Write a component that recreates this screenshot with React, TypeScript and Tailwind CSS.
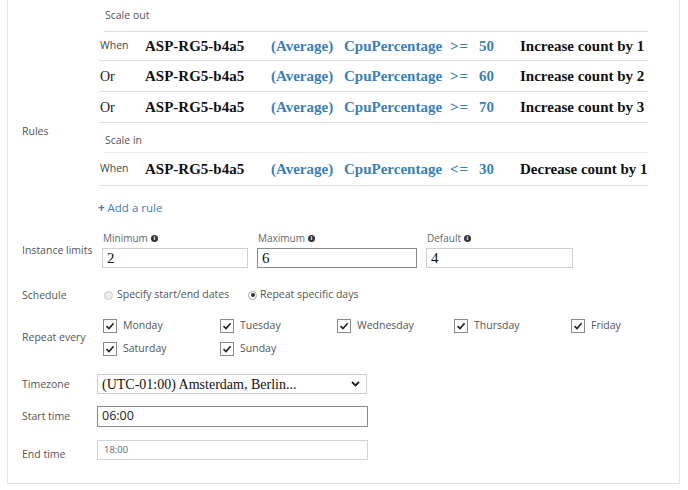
import type { ReactNode } from "react";

const SANS = "font-['Open_Sans','Noto_Sans',sans-serif]";
const SERIF = "font-['Liberation_Serif','Times_New_Roman',serif]";

type Rule = {
  lead: string;
  op: string;
  value: string;
  action: string;
  height: string;
};

const scaleOut: Rule[] = [
  { lead: "When", op: ">=", value: "50", action: "Increase count by 1", height: "h-[29px]" },
  { lead: "Or", op: ">=", value: "60", action: "Increase count by 2", height: "h-[31px]" },
  { lead: "Or", op: ">=", value: "70", action: "Increase count by 3", height: "h-[31px]" },
];

const scaleIn: Rule[] = [
  { lead: "When", op: "<=", value: "30", action: "Decrease count by 1", height: "h-[33px]" },
];

const days = [
  ["Monday", "Tuesday", "Wednesday", "Thursday", "Friday"],
  ["Saturday", "Sunday"],
];

function RuleRow({ rule }: { rule: Rule }) {
  return (
    <div className={`flex items-center border-b border-[#dedede] ${rule.height}`}>
      {rule.lead === "When" ? (
        <span className={`w-[46px] pl-[1px] text-[10.5px] text-[#444] ${SANS}`}>When</span>
      ) : (
        <span className={`w-[46px] pl-[1px] text-[14px] text-[#222] ${SERIF}`}>Or</span>
      )}
      <span className={`w-[126px] text-[15px] font-bold text-[#111] ${SERIF}`}>ASP-RG5-b4a5</span>
      <span className={`w-[73px] text-[15px] font-bold text-[#3a80b6] ${SERIF}`}>(Average)</span>
      <span className={`w-[106px] text-[15px] font-bold text-[#3a80b6] ${SERIF}`}>CpuPercentage</span>
      <span className={`w-[29px] text-[15px] font-bold tracking-[1px] text-[#3a80b6] ${SERIF}`}>{rule.op}</span>
      <span className={`w-[41px] text-[15px] font-bold text-[#3a80b6] ${SERIF}`}>{rule.value}</span>
      <span className={`flex-1 whitespace-nowrap text-[15px] font-bold text-[#111] ${SERIF}`}>{rule.action}</span>
    </div>
  );
}

function Info() {
  return (
    <span className="ml-[3px] inline-flex h-[7px] w-[7px] items-center justify-center rounded-full bg-[#333] text-[6px] font-bold leading-none text-white">
      i
    </span>
  );
}

function Checkbox({ label }: { label: string }) {
  return (
    <div className="flex w-[117px] shrink-0 items-center gap-[6px]">
      <span className="flex h-[14px] w-[14px] items-center justify-center border border-[#8a8a8a] bg-white">
        <svg width="10" height="10" viewBox="0 0 10 10">
          <path d="M1.5 5.2 L4 7.6 L8.6 2.2" fill="none" stroke="#222" strokeWidth="1.6" />
        </svg>
      </span>
      <span className={`text-[10.5px] text-[#555] ${SANS}`}>{label}</span>
    </div>
  );
}

function Row({ label, children, className = "", labelClass = "self-center" }: {
  label: string;
  children: ReactNode;
  className?: string;
  labelClass?: string;
}) {
  return (
    <div className={`flex ${className}`}>
      <div className={`w-[75px] shrink-0 text-[10.5px] leading-[15px] text-[#555] ${SANS} ${labelClass}`}>{label}</div>
      <div className="min-w-0 flex-1">{children}</div>
    </div>
  );
}

export default function App() {
  return (
    <div className="h-[490px] w-[688px] overflow-hidden bg-white">
      <div className="ml-[7px] h-[484px] w-[673px] border-b border-l border-r border-[#e4e4e4] pl-[14px]">
        <Row label="Rules" labelClass="pt-[124px]">
          <div className="ml-[2px] w-[549px]">
            <div className={`ml-[5px] flex h-[32px] items-center border-b border-[#dedede] pl-[1px] text-[10.5px] text-[#555] ${SANS}`}>
              Scale out
            </div>
            {scaleOut.map((rule, i) => (
              <RuleRow key={i} rule={rule} />
            ))}
            <div className={`ml-[5px] h-[30px] border-b border-[#ececec] pl-[1px] pt-[10px] text-[10.5px] leading-[15px] text-[#555] ${SANS}`}>
              Scale in
            </div>
            {scaleIn.map((rule, i) => (
              <RuleRow key={i} rule={rule} />
            ))}
          </div>
          <div className={`h-[40px] pl-[1px] pt-[14px] text-[11.5px] leading-[16px] text-[#3a80b6] ${SANS}`}>
            <span className="font-bold">+</span> Add a rule
          </div>
        </Row>

        <Row label="Instance limits" labelClass="pt-[17px] self-start">
          <div className="ml-[5px] flex gap-[9px]">
            {[
              { name: "Minimum", value: "2", w: "w-[146px]", border: "border-[#cfcfcf]" },
              { name: "Maximum", value: "6", w: "w-[160px]", border: "border-[#8c8c8c]" },
              { name: "Default", value: "4", w: "w-[147px]", border: "border-[#cfcfcf]" },
            ].map((f) => (
              <div key={f.name} className={f.w}>
                <div className={`flex h-[22px] items-center pl-[1px] pt-[2px] text-[10px] text-[#666] ${SANS}`}>
                  {f.name}
                  <Info />
                </div>
                <div className={`flex h-[20px] items-center border ${f.border} pl-[4px] text-[15px] text-[#111] ${SERIF}`}>
                  {f.value}
                </div>
              </div>
            ))}
          </div>
        </Row>

        <Row label="Schedule" className="mt-[16px] h-[22px]">
          <div className={`ml-[7px] flex h-[22px] items-center text-[10.5px] text-[#555] ${SANS}`}>
            <div className="flex w-[144px] items-center gap-[4px]">
              <span className="h-[9px] w-[9px] rounded-full border border-[#c8c8c8] bg-[#ececec]" />
              <span>Specify start/end dates</span>
            </div>
            <div className="flex items-center gap-[3px]">
              <span className="flex h-[9px] w-[9px] items-center justify-center rounded-full border border-[#aaa] bg-white">
                <span className="h-[4px] w-[4px] rounded-full bg-[#333]" />
              </span>
              <span>Repeat specific days</span>
            </div>
          </div>
        </Row>

        <Row label="Repeat every" className="pt-[13px]">
          <div className="ml-[6px] flex flex-col gap-[9px]">
            {days.map((line, i) => (
              <div key={i} className="flex h-[14px]">
                {line.map((d) => (
                  <Checkbox key={d} label={d} />
                ))}
              </div>
            ))}
          </div>
        </Row>

        <Row label="Timezone" className="mt-[18px]">
          <div className="flex h-[20px] w-[270px] items-center justify-between border border-[#cfcfcf] pl-[4px] pr-[6px]">
            <span className={`text-[14px] text-[#111] ${SERIF}`}>(UTC-01:00) Amsterdam, Berlin...</span>
            <svg width="9" height="6" viewBox="0 0 9 6">
              <path d="M1 1 L4.5 4.5 L8 1" fill="none" stroke="#222" strokeWidth="1.8" />
            </svg>
          </div>
        </Row>

        <Row label="Start time" className="mt-[12px]">
          <div className={`flex h-[21px] w-[271px] items-center border border-[#8c8c8c] pl-[4px] text-[12.5px] text-[#222] ${SANS}`}>
            06:00
          </div>
        </Row>

        <Row label="End time" className="mt-[13px]" labelClass="self-start pt-[7px]">
          <div className={`flex h-[20px] w-[271px] items-center border border-[#d4d4d4] pl-[6px] text-[9.5px] text-[#666] ${SANS}`}>
            18:00
          </div>
        </Row>
      </div>
    </div>
  );
}
